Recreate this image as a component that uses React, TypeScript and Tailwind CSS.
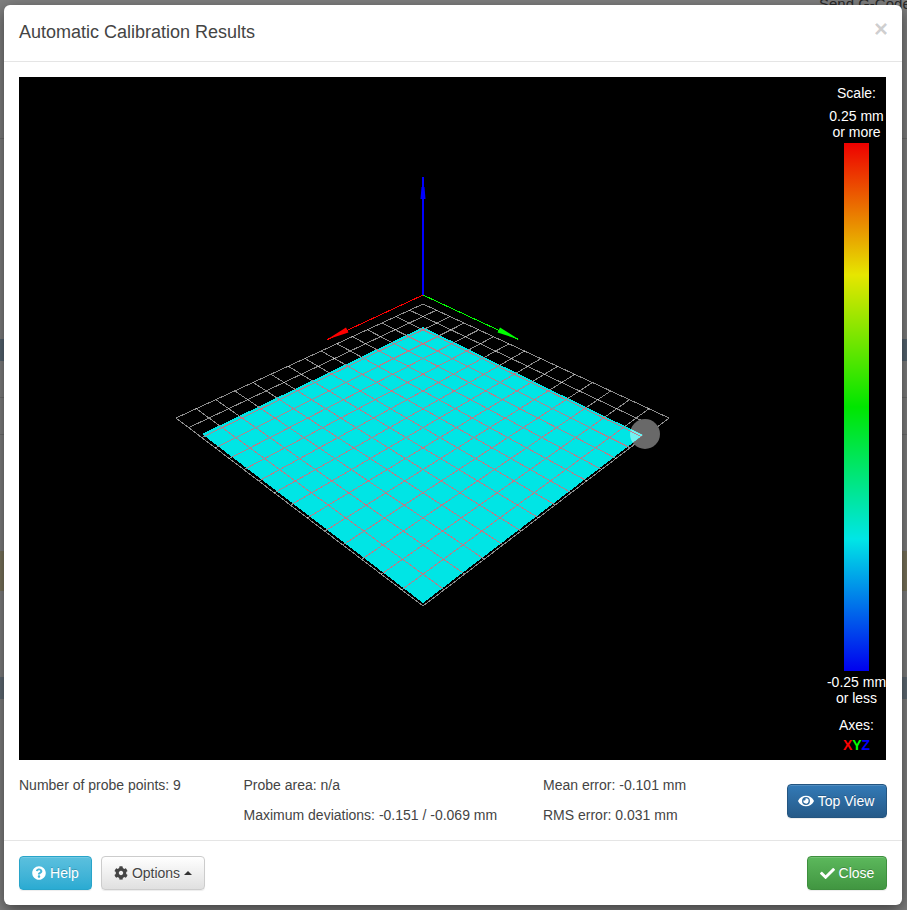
import React from 'react';
import { FaCheck, FaCog, FaEye, FaQuestionCircle } from 'react-icons/fa';

type Pt = [number, number];

// corners of the bed grid on screen, relative to the black canvas
const O: Pt = [19, 77];
const abs = (x: number, y: number): Pt => [x - O[0], y - O[1]];
const BACK = abs(423, 304);
const RIGHT = abs(669, 418);
const FRONT = abs(423, 606);
const LEFT = abs(176, 418);
const DIVISIONS = 15;

// projective map of the unit square on to the four corners
const project = (u: number, v: number): Pt => {
  const [x0, y0] = BACK;
  const [x1, y1] = RIGHT;
  const [x2, y2] = FRONT;
  const [x3, y3] = LEFT;
  const dx1 = x1 - x2;
  const dx2 = x3 - x2;
  const sx = x0 - x1 + x2 - x3;
  const dy1 = y1 - y2;
  const dy2 = y3 - y2;
  const sy = y0 - y1 + y2 - y3;
  const det = dx1 * dy2 - dx2 * dy1;
  const g = (sx * dy2 - dx2 * sy) / det;
  const h = (dx1 * sy - sx * dy1) / det;
  const a = x1 - x0 + g * x1;
  const b = x3 - x0 + h * x3;
  const d = y1 - y0 + g * y1;
  const e = y3 - y0 + h * y3;
  const w = g * u + h * v + 1;
  return [(a * u + b * v + x0) / w, (d * u + e * v + y0) / w];
};

const steps = Array.from({ length: DIVISIONS + 1 }, (_, i) => i / DIVISIONS);
const gridLines = steps.flatMap((t) => [
  [project(t, 0), project(t, 1)],
  [project(0, t), project(1, t)],
]);

const toPoints = (pts: Pt[]) => pts.map((p) => p.join(',')).join(' ');
const MESH = toPoints([abs(423, 327), abs(643, 435), abs(423, 603), abs(202, 434)]);
const CIRCLE = abs(645, 434);

const Grid = ({ stroke, opacity }: { stroke: string; opacity: number }) => (
  <g stroke={stroke} strokeOpacity={opacity} strokeWidth="1" shapeRendering="crispEdges">
    {gridLines.map(([a, b], i) => (
      <line key={i} x1={a[0]} y1={a[1]} x2={b[0]} y2={b[1]} />
    ))}
  </g>
);

const BedView = () => (
  <svg className="absolute inset-0" width="867" height="683" viewBox="0 0 867 683">
    <defs>
      <clipPath id="meshClip">
        <polygon points={MESH} />
      </clipPath>
    </defs>
    <Grid stroke="#ffffff" opacity={0.55} />
    <circle cx={CIRCLE[0]} cy={CIRCLE[1]} r="15" fill="#696969" />
    <polygon points={MESH} fill="#00e5e5" shapeRendering="crispEdges" />
    <g clipPath="url(#meshClip)">
      <circle cx={CIRCLE[0]} cy={CIRCLE[1]} r="15" fill="#ffffff" fillOpacity="0.45" />
      <Grid stroke="#d46f7b" opacity={0.85} />
    </g>
    {/* axes */}
    <line x1="404" y1="218" x2="308.5" y2="262.5" stroke="#ff0000" strokeWidth="1" shapeRendering="crispEdges" />
    <polygon points="308,262.5 327,250.5 329.5,255.5" fill="#ff0000" />
    <line x1="404" y1="218" x2="499.5" y2="262.5" stroke="#00ff00" strokeWidth="1" shapeRendering="crispEdges" />
    <polygon points="500,262.5 481,250.5 478.5,255.5" fill="#00ff00" />
    <rect x="403" y="100" width="2" height="118" fill="#0000ff" />
    <polygon points="402.5,110 405.5,110 406.5,122 401.5,122" fill="#0000ff" />
  </svg>
);

const ScalePanel = () => (
  <div className="absolute top-0 right-0 flex h-full w-[59px] flex-col items-center overflow-hidden text-center text-[14px] leading-[16px] whitespace-nowrap text-white">
    <div className="mt-[8px]">Scale:</div>
    <div className="mt-[7px]">0.25 mm</div>
    <div>or more</div>
    <div className="mt-[3px] h-[528px] w-[25px] shrink-0 bg-[linear-gradient(to_bottom,#ee0000,#e6e600_25%,#00e600_50%,#00e6e6_75%,#0000ee)]" />
    <div className="mt-[3px] w-[70px]">-0.25 mm</div>
    <div>or less</div>
    <div className="mt-[11px]">Axes:</div>
    <div className="mt-[4px] font-bold">
      <span className="text-[#ff0000]">X</span>
      <span className="text-[#00ff00]">Y</span>
      <span className="text-[#0000ff]">Z</span>
    </div>
  </div>
);

const btn =
  'flex h-[34px] items-center justify-center gap-[4px] rounded-[4px] border text-[14px] shadow-[inset_0_1px_0_rgba(255,255,255,0.15),0_1px_1px_rgba(0,0,0,0.075)]';
const btnDark = '[text-shadow:0_-1px_0_rgba(0,0,0,0.2)] text-white';

const App = () => {
  return (
    <div className="relative h-[910px] w-[907px] overflow-hidden bg-white font-['Liberation_Sans',Arial,sans-serif] text-[14px] text-[#444444]">
      {/* page behind the dialog */}
      <div className="flex h-[6px] justify-start pl-[819px] text-[15px] leading-[8px] whitespace-nowrap text-[#555555]">Send G-Code</div>
      <div className="mt-[132px] h-[1px] bg-[#dddddd]" />
      <div className="mt-[200px] h-[22px] bg-[#337ab7]/40" />
      <div className="mt-[36px] h-[1px] bg-[#dddddd]" />
      <div className="mt-[36px] h-[1px] bg-[#dddddd]" />
      <div className="mt-[116px] h-[40px] bg-[#f5e9b8]" />
      <div className="mt-[86px] h-[22px] bg-[#337ab7]/30" />
      <div className="absolute inset-0 bg-black/50" />

      <div className="absolute top-[5px] left-[4px] flex h-[900px] w-[898px] flex-col rounded-[6px] bg-white shadow-[0_5px_15px_rgba(0,0,0,0.5)]">
        <div className="flex h-[57px] items-center justify-between border-b border-[#e5e5e5] pr-[14px] pb-[2px] pl-[15px]">
          <h4 className="text-[18px] leading-[26px] text-[#444444]">Automatic Calibration Results</h4>
          <span className="mb-[7px] text-[24px] leading-none font-bold text-black/20 [text-shadow:0_1px_0_#fff]">×</span>
        </div>

        <div className="flex flex-1 flex-col px-[15px] pt-[15px]">
          <div className="relative h-[683px] w-[867px] shrink-0 overflow-hidden bg-black">
            <BedView />
            <ScalePanel />
          </div>

          <div className="flex pt-[15px]">
            <div className="w-[224.5px] leading-[20px]">Number of probe points: 9</div>
            <div className="flex w-[299.5px] flex-col gap-[10px] leading-[20px]">
              <div>Probe area: n/a</div>
              <div>Maximum deviations: -0.151 / -0.069 mm</div>
            </div>
            <div className="flex flex-col gap-[10px] leading-[20px]">
              <div>Mean error: -0.101 mm</div>
              <div>RMS error: 0.031 mm</div>
            </div>
            <button
              className={`${btn} ${btnDark} mt-[9px] ml-auto w-[100px] gap-[2px] border-[#245580] bg-gradient-to-b from-[#337ab7] to-[#265a88] pr-[2px]`}
            >
              <FaEye className="h-[14px] w-[16px]" />
              Top View
            </button>
          </div>
        </div>

        <div className="flex h-[65px] items-start justify-between border-t border-[#e5e5e5] px-[15px] pt-[15px]">
          <div className="flex gap-[9px]">
            <button
              className={`${btn} ${btnDark} w-[73px] border-[#28a4c9] bg-gradient-to-b from-[#5bc0de] to-[#2aabd2]`}
            >
              <FaQuestionCircle className="h-[14px] w-[14px]" />
              Help
            </button>
            <button
              className={`${btn} w-[104px] border-[#cccccc] bg-gradient-to-b from-white to-[#e0e0e0] [text-shadow:0_1px_0_#fff]`}
            >
              <FaCog className="h-[14px] w-[14px]" />
              Options
              <span className="h-0 w-0 border-x-[4px] border-b-[4px] border-x-transparent border-b-[#333333]" />
            </button>
          </div>
          <button
            className={`${btn} ${btnDark} w-[80px] border-[#3e8f3e] bg-gradient-to-b from-[#5cb85c] to-[#419641]`}
          >
            <FaCheck className="h-[15px] w-[15px]" />
            Close
          </button>
        </div>
      </div>
    </div>
  );
};

export default App;
